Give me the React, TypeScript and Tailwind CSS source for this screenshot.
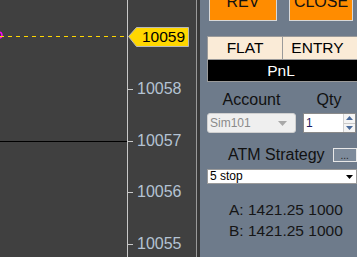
const prices = [
  { label: '10058', y: 89 },
  { label: '10057', y: 141 },
  { label: '10056', y: 192 },
  { label: '10055', y: 244 },
];

function PriceChart() {
  return (
    <div className="relative w-[196px] h-full bg-[#404040] overflow-hidden">
      <svg className="absolute inset-0" width="196" height="257">
        <circle cx="-1" cy="35" r="3" fill="none" stroke="#ff00ff" strokeWidth="1.5" />
        <line x1="0" y1="36.5" x2="128" y2="36.5" stroke="#ffd700" strokeDasharray="4 4" />
        <line x1="0" y1="141.5" x2="127" y2="141.5" stroke="#000" />
        <line x1="127.5" y1="0" x2="127.5" y2="257" stroke="#c8c8c8" />
        {prices.map((p) => (
          <line key={p.label} x1="128" y1={p.y + 0.5} x2="133" y2={p.y + 0.5} stroke="#c8c8c8" />
        ))}
        <polygon points="128.5,36.5 136.5,27.5 188.5,27.5 188.5,46.5 136.5,46.5" fill="#ffd700" stroke="#b8b8b8" />
      </svg>
      <div className="absolute left-[142px] top-[28px] h-[18px] leading-[18px] text-[15.5px] text-black">10059</div>
      {prices.map((p) => (
        <div
          key={p.label}
          className="absolute left-[137px] h-[18px] leading-[18px] text-[16px] text-[#b4c3d3]"
          style={{ top: p.y - 9 }}
        >
          {p.label}
        </div>
      ))}
    </div>
  );
}

function Panel() {
  return (
    <div className="flex-1 h-full bg-[#6e7b8b] flex flex-col pl-[7px] overflow-hidden text-[#111]">
      <div className="flex h-[21px] pl-[2px] gap-[12px]">
        <div className="w-[68px] h-[21px] bg-[#ff8c00] border-l border-b border-r border-[#d8d8d8] overflow-hidden flex justify-center">
          <span className="-mt-[6px] leading-[16px] text-[16px]">REV</span>
        </div>
        <div className="w-[64px] h-[21px] bg-[#ff8c00] border-l border-b border-r border-[#d8d8d8] overflow-hidden flex justify-center">
          <span className="-mt-[6px] leading-[16px] text-[16px]">CLOSE</span>
        </div>
      </div>

      <div className="mt-[15px] w-[152px] border border-[#9a9a9a] text-[15.5px]">
        <div className="flex h-[22px] bg-[#faebd7] text-black">
          <div className="w-[75px] border-r border-[#9a9a9a] flex items-center justify-center">FLAT</div>
          <div className="flex-1 flex items-center justify-center pr-[6px]">ENTRY</div>
        </div>
        <div className="h-[22px] bg-black text-white flex items-center justify-center pr-[4px] border-t border-[#9a9a9a]">
          PnL
        </div>
      </div>

      <div className="mt-[9px] flex text-[16px] leading-[18px]">
        <div className="w-[89px] text-center">Account</div>
        <div className="ml-[7px] w-[52px] text-center">Qty</div>
      </div>

      <div className="mt-[4px] flex items-center">
        <div className="w-[89px] h-[20px] bg-[#efefef] border border-[#d0d0d0] rounded-[3px] flex items-center pl-[2px] pr-[8px]">
          <span className="text-[12px] text-[#8a8a8a] flex-1">Sim101</span>
          <svg width="9" height="5" viewBox="0 0 9 5">
            <polygon points="0,0 9,0 4.5,5" fill="#a8a8a8" />
          </svg>
        </div>
        <div className="ml-[7px] w-[53px] h-[20px] bg-white border border-[#8a8a8a] flex">
          <span className="flex-1 text-[12px] leading-[18px] pl-[2px] text-[#1a1a60]">1</span>
          <div className="w-[12px] flex flex-col border-l border-[#d0d0d0]">
            <div className="flex-1 flex items-center justify-center bg-[#f4f4f4] border-b border-[#c8c8c8]">
              <svg width="7" height="4" viewBox="0 0 7 4">
                <polygon points="0,4 7,4 3.5,0" fill="#4a6a9a" />
              </svg>
            </div>
            <div className="flex-1 flex items-center justify-center bg-[#f4f4f4]">
              <svg width="7" height="4" viewBox="0 0 7 4">
                <polygon points="0,0 7,0 3.5,4" fill="#4a6a9a" />
              </svg>
            </div>
          </div>
        </div>
      </div>

      <div className="mt-[13px] flex items-center h-[17px]">
        <div className="ml-[21px] text-[16px] leading-[17px]">ATM Strategy</div>
        <div className="ml-[8px] w-[24px] h-[14px] bg-[#7d8a9a] border border-[#e8e8e8] flex items-end justify-center text-[10px] leading-[10px] text-[#222]">
          ...
        </div>
      </div>

      <div className="mt-[6px] w-[150px] h-[15px] bg-white border border-[#9a9a9a] flex items-center pl-[2px] pr-[3px]">
        <span className="flex-1 text-[12px] leading-[13px] text-black">5 stop</span>
        <svg width="7" height="4" viewBox="0 0 7 4">
          <polygon points="0,0 7,0 3.5,4" fill="#000" />
        </svg>
      </div>

      <div className="mt-[15px] pl-[22px] text-[15.5px] leading-[21px] text-[#151515]">
        <div>A: 1421.25 1000</div>
        <div>B: 1421.25 1000</div>
      </div>
    </div>
  );
}

export default function App() {
  return (
    <div className="w-[357px] h-[257px] flex overflow-hidden font-['Liberation_Sans',Arial,sans-serif]">
      <PriceChart />
      <div className="w-px h-full bg-[#9a9a9a]" />
      <div className="w-[3px] h-full bg-[#383838]" />
      <Panel />
    </div>
  );
}
